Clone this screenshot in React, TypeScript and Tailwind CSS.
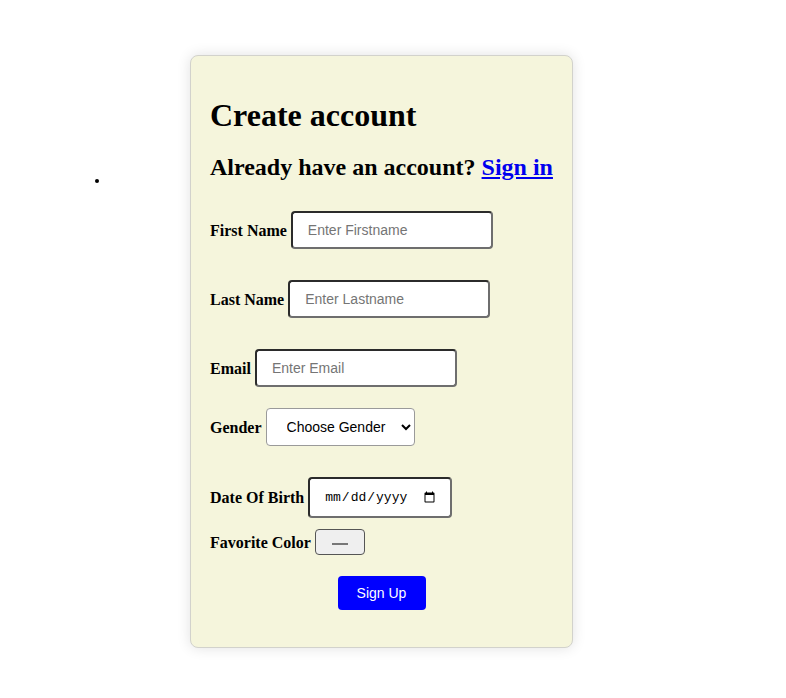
export default function App() {
  const serif = "font-['Liberation_Serif','Times_New_Roman',serif]"
  const sans = "font-['Liberation_Sans',Arial,sans-serif]"
  const label = `${serif} text-[16px] font-bold text-black leading-[18px] mt-[1px]`
  const textInput =
    `${sans} h-[38px] w-[202px] rounded-[4px] border-2 border-[#2b2b2b] border-r-[#6e6e6e] border-b-[#6e6e6e] bg-white px-[15px] text-[14px] text-black placeholder:text-[#757575] outline-none`

  return (
    <div className="min-h-[698px] w-[786px] bg-white">
      <div className="flex items-start pt-[55px]">
        {/* stray list marker */}
        <div className="ml-[95px] mt-[124px] h-[4px] w-[4px] rounded-full bg-black" />

        <div className="ml-[91px] w-[383px] rounded-[8px] border border-[#d2d2cc] bg-[#f5f5dc] px-[19px] pt-[42px] pb-[37px] shadow-[0_0_14px_rgba(0,0,0,0.12)]">
          <h1 className={`${serif} text-[32px] font-bold leading-[35px] text-black`}>Create account</h1>
          <h2 className={`${serif} mt-[21px] text-[24px] font-bold leading-[27px] text-black whitespace-nowrap`}>
            Already have an account? <a href="#" className="text-[#0000ee] underline">Sign in</a>
          </h2>

          <div className="mt-[30px] flex items-center gap-[4px]">
            <label className={label}>First Name</label>
            <input className={textInput} placeholder="Enter Firstname" />
          </div>

          <div className="mt-[31px] flex items-center gap-[4px]">
            <label className={label}>Last Name</label>
            <input className={textInput} placeholder="Enter Lastname" />
          </div>

          <div className="mt-[31px] flex items-center gap-[4px]">
            <label className={label}>Email</label>
            <input className={textInput} placeholder="Enter Email" />
          </div>

          <div className="mt-[21px] flex items-center gap-[4px]">
            <label className={label}>Gender</label>
            <select
              defaultValue=""
              className={`${sans} h-[38px] w-[149px] rounded-[4px] border border-[#9a9a9a] bg-white pl-[16px] pr-[4px] text-[14px] text-black`}
            >
              <option value="">Choose Gender</option>
              <option value="m">Male</option>
              <option value="f">Female</option>
            </select>
          </div>

          <div className="mt-[31px] flex items-center gap-[4px]">
            <label className={label}>Date Of Birth</label>
            <input
              type="date"
              className="h-[41px] w-[144px] rounded-[4px] border-2 border-[#2b2b2b] border-r-[#6e6e6e] border-b-[#6e6e6e] bg-white pl-[14px] pr-[12px] font-['Liberation_Mono',monospace] text-[13px] text-black"
            />
          </div>

          <div className="mt-[11px] flex items-center gap-[4px]">
            <label className={label}>Favorite Color</label>
            <div className="flex h-[26px] w-[50px] items-center justify-center rounded-[4px] border border-[#555] bg-[#efefef]">
              <span className="mt-[3px] h-[2px] w-[16px] bg-[#777]" />
            </div>
          </div>

          <div className="mt-[21px] flex justify-center">
            <button className={`${sans} h-[34px] w-[88px] rounded-[4px] bg-[#0000ff] text-[14px] text-white`}>
              Sign Up
            </button>
          </div>
        </div>
      </div>
    </div>
  )
}
